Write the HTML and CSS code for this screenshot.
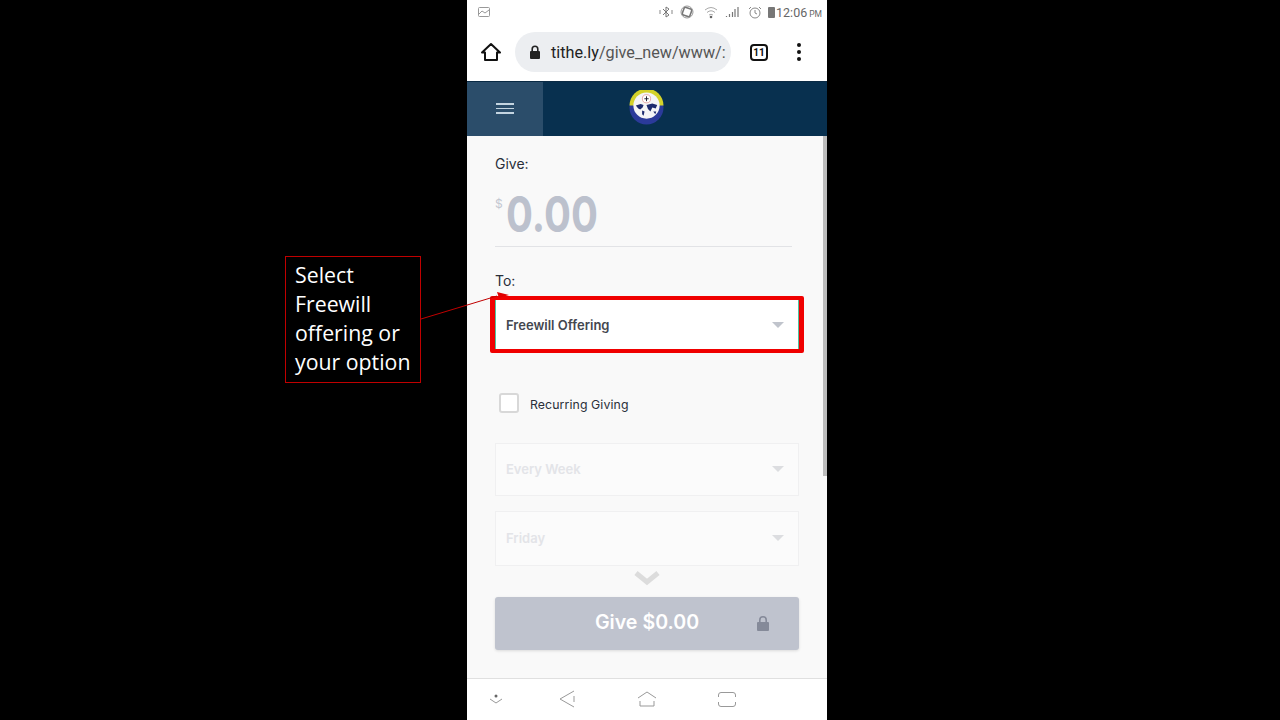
FILE: index.html
```html
<!DOCTYPE html>
<html lang="en">
<head>
<meta charset="utf-8">
<title>Give</title>
<link rel="stylesheet" href="styles.css">
</head>
<body>
<div class="stage">
  <div class="callout">Select<br>Freewill<br>offering or<br>your option</div>
  <svg class="leader" width="90" height="40" viewBox="0 0 90 40"><path d="M0 33 L76 10" stroke="#c00000" stroke-width="1" fill="none"/><path d="M76 6 L88 9 L78 12 Z" fill="#e00000"/></svg>
  <main class="phone">
    <div class="status">
      <svg class="st-img" width="12" height="10" viewBox="0 0 12 10"><rect x=".5" y=".5" width="11" height="9" rx="1" fill="none" stroke="#999"/><path d="M1 7 L4 4 L7 6 L11 3" fill="none" stroke="#999"/></svg>
      <div class="st-right">
        <svg width="14" height="12" viewBox="0 0 14 12"><path d="M4 3 L10 9 L7 11 V1 L10 3 L4 9" fill="none" stroke="#777"/><path d="M1 4 V8 M13 4 V8" stroke="#aaa" stroke-width="1.4"/></svg>
        <svg class="st-gap" width="14" height="14" viewBox="0 0 14 14"><rect x="3" y="3" width="8" height="8" rx="1.5" fill="none" stroke="#777" stroke-width="1.6" transform="rotate(20 7 7)"/><circle cx="7" cy="7" r="6" fill="none" stroke="#999"/></svg>
        <svg class="st-gap wifi" width="14" height="13" viewBox="0 0 14 13"><path d="M1 4 Q7 -1 13 4 M3 6.5 Q7 3 11 6.5 M5 9 Q7 7.5 9 9" fill="none" stroke="#aaa"/><circle cx="7" cy="11" r="1.3" fill="#666"/></svg>
        <svg class="st-gap" width="14" height="12" viewBox="0 0 14 12"><path d="M1.5 10 V11 M4.5 8 V11 M7.5 6 V11 M10 3 V11 M13 1 V11" stroke="#777" stroke-width="1.2"/></svg>
        <svg class="st-gap alarm" width="14" height="13" viewBox="0 0 14 13"><circle cx="7" cy="7" r="5" fill="none" stroke="#888"/><path d="M7 4 V7 L9 8 M1 3 L3 1 M13 3 L11 1" fill="none" stroke="#888"/></svg>
        <span class="batt"></span>
        <span class="clock">12:06<small>PM</small></span>
      </div>
    </div>
    <div class="chrome">
      <svg class="home" width="20" height="20" viewBox="0 0 20 20"><path d="M10 2 L19 10.5 H16 V18 H4 V10.5 H1 Z" fill="none" stroke="#111" stroke-width="2" stroke-linejoin="round"/></svg>
      <div class="url">
        <svg width="12" height="15" viewBox="0 0 12 15"><rect x="1" y="6" width="10" height="8" rx="1" fill="#222"/><path d="M3.2 6 V4 A2.8 2.8 0 0 1 8.8 4 V6" fill="none" stroke="#222" stroke-width="1.6"/></svg>
        <span class="url-text"><b>tithe.ly</b>/give_new/www/:</span>
      </div>
      <span class="tabs">11</span>
      <span class="dots"><i></i><i></i><i></i></span>
    </div>
    <header class="bar">
      <div class="burger"><i></i><i></i><i></i></div>
      <div class="logo-wrap">
        <svg width="35" height="35" viewBox="0 0 36 36">
          <circle cx="18" cy="18" r="17.500" fill="#2b3a9a"/>
          <path d="M.5 16 A17.500 17.500 0 0 1 35.500 16 Z" fill="#d4d22a"/>
          <circle cx="18" cy="16" r="13.500" fill="#f4f4f6"/>
          <circle cx="18" cy="9" r="4.200" fill="#fff" stroke="#d88" stroke-width=".7"/>
          <path d="M18 6.500 V11.500 M15.800 9 H20.200" stroke="#223" stroke-width="1"/>
          <path d="M7 16 L12 14.500 L15 15.500 L14 18 L11.500 20 L9.500 19 Z M18 15.500 L24 14 L29 15.500 L27.500 19 L24 18 L22 22 L19.500 19.500 Z M13.500 21 L16 22 L15 26.500 L13.500 25 Z M25 22 L28 22 L27 25 Z" fill="#1c2a6e"/>
        </svg>
      </div>
    </header>
    <section class="content">
      <label class="lbl">Give:</label>
      <div class="amount"><span class="cur">$</span><span class="num">0.00</span></div>
      <label class="lbl to">To:</label>
      <div class="select active"><span>Freewill Offering</span><i class="caret"></i></div>
      <div class="check"><span class="box"></span><span class="check-label">Recurring Giving</span></div>
      <div class="select faded"><span>Every Week</span><i class="caret"></i></div>
      <div class="select faded second"><span>Friday</span><i class="caret"></i></div>
      <svg class="chev" width="28" height="16" viewBox="0 0 28 16"><path d="M3 3 L14 12 L25 3" fill="none" stroke="#dcdcdc" stroke-width="5"/></svg>
      <button class="give" type="button"><span>Give $0.00</span>
        <svg class="give-lock" width="12" height="15" viewBox="0 0 12 15"><rect x="0" y="6" width="12" height="9" rx="1" fill="#858a99"/><path d="M2.800 6 V4 A3.200 3.200 0 0 1 9.200 4 V6" fill="none" stroke="#858a99" stroke-width="1.6"/></svg>
      </button>
      <div class="scroll"></div>
    </section>
    <nav class="softkeys">
      <svg width="14" height="12" viewBox="0 0 14 12"><circle cx="7" cy="3" r="1.500" fill="#666"/><path d="M1 6 L7 10 L13 6" fill="none" stroke="#999"/></svg>
      <svg class="sk-back" width="16" height="18" viewBox="0 0 16 18"><path d="M15 1 L1 9 L15 17 M15 6 V12" fill="none" stroke="#999"/></svg>
      <svg class="sk-home" width="20" height="17" viewBox="0 0 20 17"><path d="M1 7 L10 1 L19 7 M3 10 V15 H17 V10" fill="none" stroke="#999"/></svg>
      <svg width="18" height="15" viewBox="0 0 18 15"><path d="M.5 5 V3 A2.500 2.500 0 0 1 3 .5 H15 A2.500 2.500 0 0 1 17.500 3 V5 M.5 10 V12 A2.500 2.500 0 0 0 3 14.500 H15 A2.500 2.500 0 0 0 17.500 12 V10" fill="none" stroke="#999"/></svg>
    </nav>
  </main>
</div>
</body>
</html>
```
FILE: styles.css
```css
* { box-sizing: border-box; }
html, body { margin: 0; height: 100%; background: #000; }
body { font-family: Inter, "Liberation Sans", sans-serif; overflow: hidden; }
.stage { position: relative; width: 1280px; height: 720px; background: #000; display: flex; justify-content: center; padding-left: 14px; }
.callout {
  position: absolute; left: 285px; top: 256px; width: 136px; height: 127px;
  border: 1px solid #c00000; color: #fff; padding: 3px 0 0 9px;
  font: 21.300px/29px "Open Sans", sans-serif;
}
.leader { position: absolute; left: 421px; top: 286px; z-index: 3; }
.phone { width: 360px; height: 720px; display: flex; flex-direction: column; background: #fff; }
.status { height: 24px; display: flex; align-items: center; justify-content: space-between; padding: 0 5px 0 11px; }
.st-right { display: flex; align-items: center; }
.st-gap { margin-left: 7px; }
.wifi { margin-left: 10px; }
.alarm { margin-left: 9px; }
.batt { width: 7px; height: 11px; background: #777; margin-left: 6px; border-radius: 1px; }
.clock { font: 12.500px "Roboto", sans-serif; color: #666; margin-left: 1px; }
.clock small { font-size: 8.500px; margin-left: 2px; }
.chrome { height: 57px; display: flex; align-items: center; padding: 0 0 1px 14px; }
.home { flex: none; }
.url { width: 216px; height: 40px; border-radius: 20px; background: #eceef1; margin-left: 14px; display: flex; align-items: center; padding-left: 14px; overflow: hidden; }
.url-text { font: 16.200px "Roboto", sans-serif; color: #555; margin-left: 10px; white-space: nowrap; }
.url-text b { font-weight: 400; color: #222; }
.tabs { width: 18px; height: 17px; border: 2px solid #111; border-radius: 4px; margin-left: 19px; font: 700 10px/13px Roboto, sans-serif; text-align: center; color: #111; }
.dots { display: flex; flex-direction: column; gap: 3px; margin-left: 29px; }
.dots i { width: 4px; height: 4px; border-radius: 50%; background: #111; }
.bar { height: 55px; background: #08304f; display: flex; border-top: 1px solid #0a2a44; }
.burger { width: 76px; background: #2b4d6a; display: flex; flex-direction: column; align-items: center; justify-content: center; gap: 3px; padding-bottom: 1px; }
.burger i { width: 18px; height: 1.500px; background: #c4d4e0; }
.logo-wrap { margin-left: 86px; padding-top: 8px; height: 36px; }
.content { position: relative; height: 542px; background: #f9f9f9; padding: 19px 28px 0; display: flex; flex-direction: column; }
.lbl { font-size: 14px; line-height: 17px; color: #2a2f3a; }
.amount { width: 297px; height: 67px; margin-top: 8px; border-bottom: 1px solid #e2e3e6; display: flex; align-items: flex-start; }
.cur { font-size: 12px; color: #c3c7d1; margin-top: 16px; }
.num { font-size: 50px; font-weight: 700; line-height: 52px; color: #bcc1cd; margin: 8px 0 0 3px; transform: scaleX(.8); transform-origin: left center; }
.to { margin-top: 25px; }
.select { width: 304px; height: 54px; display: flex; align-items: center; justify-content: space-between; padding: 0 14px 0 11px; font-size: 13px; font-weight: 600; background: #fff; }
.active { position: relative; margin-top: 9px; color: #44474f; border-left: 1px solid #4fc4a0; border-right: 1px solid #4fc4a0; padding-left: 10px; }
.active::after { content: ""; position: absolute; left: -6px; right: -6px; top: -2px; bottom: -1px; border: solid #f00000; border-width: 4px 5px; border-radius: 2px; }
.caret { width: 0; height: 0; border-left: 6px solid transparent; border-right: 6px solid transparent; border-top: 6px solid #c0c4cc; }
.check { display: flex; align-items: center; margin-top: 41px; padding-left: 4px; height: 20px; font-size: 12.300px; color: #2a2f3a; font-weight: 400; }
.check-label { padding-top: 2px; letter-spacing: .1px; }
.box { width: 20px; height: 20px; border: 2px solid #d8d8d8; border-radius: 3px; background: #fff; margin-right: 11px; }
.faded { height: 53px; margin-top: 30px; background: #fbfbfb; border: 1px solid #f0f0f1; color: #e3e4e8; padding: 0 14px 2px 10px; }
.faded .caret { border-top-color: #dcdde0; }
.second { height: 55px; margin-top: 15px; }
.chev { align-self: center; margin-top: 4px; flex: none; }
.give { position: relative; width: 304px; height: 53px; margin-top: 11px; border: 0; border-radius: 3px; background: #bfc3ce; color: #fff; font: 600 19.600px Inter, sans-serif; box-shadow: 0 1px 3px rgba(0,0,0,.12); padding: 0 0 3px; }
.give-lock { position: absolute; right: 30px; top: 19px; }
.scroll { position: absolute; right: 0; top: 0; width: 4px; height: 340px; background: #bcbcbc; }
.softkeys { height: 42px; border-top: 1px solid #e0e0e0; background: #fff; display: flex; align-items: center; padding: 0 0 1px 22px; gap: 61px; }
.sk-back { margin-left: -5px; }
.sk-home { margin-left: 1px; }
```
